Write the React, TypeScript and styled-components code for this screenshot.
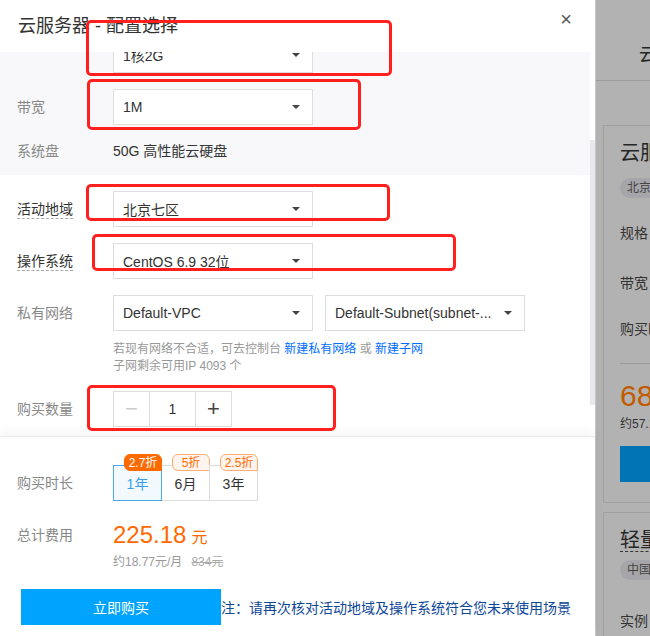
import styled, { createGlobalStyle } from "styled-components";

const GlobalStyle = createGlobalStyle`
	html, body {
		margin: 0;
		padding: 0;
	}
	body {
		font-family: "Liberation Sans", "Noto Sans CJK SC", sans-serif;
		color: #333;
	}
	* {
		box-sizing: border-box;
	}
`

const Page = styled.div`
	position: relative;
	width: 650px;
	height: 636px;
	display: flex;
	overflow: hidden;
`

const Modal = styled.div`
	width: 595px;
	height: 100%;
	display: flex;
	flex-direction: column;
	background: #fff;
`

const Header = styled.div`
	height: 52px;
	flex: none;
	display: flex;
	align-items: center;
	justify-content: space-between;
	padding: 0 23px 4px 18px;
`

const Title = styled.div`
	font-size: 18px;
	color: #333;
`

const Close = styled.div`
	font-size: 20px;
	line-height: 1;
	color: #555;
	margin-top: -10px;
`

const Body = styled.div`
	flex: 1;
	display: flex;
	min-height: 0;
`

const Content = styled.div`
	flex: 1;
	overflow: hidden;
`

const Scroller = styled.div`
	margin-top: -31px;
`

const Rail = styled.div`
	width: 5px;
	flex: none;
	padding-top: 88px;
`

const Thumb = styled.div`
	height: 265px;
	background: #e8e8ee;
`

const Section = styled.div<{ $gray?: boolean }>`
	display: flex;
	flex-direction: column;
	gap: 16px;
	padding: ${(p) => (p.$gray ? "16px 0 14px" : "16px 0 20px")};
	background: ${(p) => (p.$gray ? "#f8f8fa" : "#fff")};
`

const Field = styled.div<{ $gap?: number }>`
	display: flex;
	align-items: flex-start;
	padding-left: 17px;
	margin-top: ${(p) => p.$gap ?? 0}px;
`

const Label = styled.div<{ $strong?: boolean; $tall?: number }>`
	width: 96px;
	flex: none;
	font-size: 14px;
	line-height: ${(p) => p.$tall ?? 36}px;
	color: ${(p) => (p.$strong ? "#333" : "#888")};

	span {
		border-bottom: ${(p) => (p.$strong ? "1px dashed #aaa" : "none")};
		padding-bottom: 1px;
	}
`

const Control = styled.div`
	display: flex;
	flex-direction: column;
`

const SelectRow = styled.div`
	display: flex;
	gap: 12px;
`

const Select = styled.div`
	width: 200px;
	height: 36px;
	border: 1px solid #ddd;
	background: #fff;
	display: flex;
	align-items: center;
	justify-content: space-between;
	padding: 0 12px 0 9px;
	font-size: 14px;
	color: #333;
	white-space: nowrap;
`

const Caret = styled.span`
	width: 0;
	height: 0;
	border-left: 4px solid transparent;
	border-right: 4px solid transparent;
	border-top: 4px solid #444;
	flex: none;
	margin-left: 8px;
`

const PlainValue = styled.div`
	font-size: 14px;
	line-height: 20px;
	color: #333;
`

const Hint = styled.div`
	margin-top: 10px;
	font-size: 12px;
	line-height: 17px;
	color: #999;

	a {
		color: #006eff;
		text-decoration: none;
	}
`

const Stepper = styled.div`
	display: flex;
	height: 36px;
	border: 1px solid #ddd;
	background: #fff;
`

const StepButton = styled.div<{ $disabled?: boolean }>`
	width: 35px;
	display: flex;
	align-items: center;
	justify-content: center;
	font-size: 22px;
	font-weight: 300;
	color: ${(p) => (p.$disabled ? "#ccc" : "#444")};
`

const StepValue = styled.div`
	width: 47px;
	border-left: 1px solid #ddd;
	border-right: 1px solid #ddd;
	display: flex;
	align-items: center;
	justify-content: center;
	font-size: 14px;
	color: #333;
`

const Footer = styled.div`
	position: relative;
	height: 200px;
	flex: none;
	background: #fff;
	border-top: 1px solid #ececf0;
	box-shadow: 0 -5px 10px rgba(0, 0, 0, 0.04);
	padding-top: 28px;
`

const Tabs = styled.div`
	display: flex;
`

const Tab = styled.div<{ $active?: boolean }>`
	position: relative;
	width: 49px;
	height: 36px;
	margin-left: -1px;
	display: flex;
	align-items: center;
	justify-content: center;
	font-size: 14px;
	border: 1px solid ${(p) => (p.$active ? "#4aa9f2" : "#ddd")};
	background: ${(p) => (p.$active ? "#f3faff" : "#fff")};
	color: ${(p) => (p.$active ? "#3a9fef" : "#333")};
	z-index: ${(p) => (p.$active ? 2 : 1)};

	&:first-child {
		margin-left: 0;
	}
`

const Badge = styled.div<{ $solid?: boolean }>`
	position: absolute;
	top: -12px;
	right: -1px;
	width: 38px;
	height: 17px;
	line-height: 16px;
	text-align: center;
	font-size: 12px;
	border-radius: 6px 6px 0 6px;
	border: 1px solid ${(p) => (p.$solid ? "#ff6a00" : "#ffab74")};
	background: ${(p) => (p.$solid ? "#ff6a00" : "#fff5ee")};
	color: ${(p) => (p.$solid ? "#fff" : "#ff6a00")};
`

const PriceBlock = styled.div`
	display: flex;
	flex-direction: column;
`

const Price = styled.div`
	line-height: 28px;
	color: #ff6a00;
	font-size: 24px;

	small {
		font-size: 16px;
		margin-left: 5px;
	}
`

const PriceSub = styled.div`
	font-size: 12px;
	line-height: 20px;
	color: #999;

	s {
		color: #aaa;
		margin-left: 9px;
	}
`

const ActionRow = styled.div`
	display: flex;
	align-items: center;
	margin-top: 17px;
	padding-left: 21px;
`

const BuyButton = styled.div`
	width: 200px;
	height: 36px;
	background: #00a4ff;
	color: #fff;
	font-size: 14px;
	display: flex;
	align-items: center;
	justify-content: center;
`

const Note = styled.div`
	font-size: 14px;
	color: #0d4798;
	white-space: nowrap;
`

const Sidebar = styled.div`
	flex: 1;
	background: #b2b2b2;
	border-left: 1px solid #c6c6c6;
	overflow: hidden;
	white-space: nowrap;
	color: #262626;
`

const SideHead = styled.div`
	height: 81px;
	border-bottom: 1px solid #9c9c9c;
	padding: 45px 0 0 43px;
	font-size: 18px;
	line-height: 20px;
`

const SideBody = styled.div`
	padding: 44px 0 0 7px;
	display: flex;
	flex-direction: column;
	gap: 9px;
`

const Card = styled.div<{ $height: number }>`
	width: 120px;
	height: ${(p) => p.$height}px;
	border: 1px solid #a0a0a0;
	border-right: none;
	padding: 16px 0 0 16px;
	display: flex;
	flex-direction: column;
	align-items: flex-start;
`

const CardTitle = styled.div<{ $dashed?: boolean }>`
	font-size: 20px;
	line-height: 22px;
	border-bottom: ${(p) => (p.$dashed ? "1px dashed #333" : "none")};
`

const Pill = styled.div<{ $gap: number }>`
	margin-top: ${(p) => p.$gap}px;
	height: 20px;
	line-height: 20px;
	padding: 0 10px 0 7px;
	border-radius: 10px;
	background: #a6a6aa;
	font-size: 12px;
	color: #444;
`

const SideLabel = styled.div<{ $gap: number }>`
	margin-top: ${(p) => p.$gap}px;
	font-size: 14px;
	line-height: 20px;
	color: #333;
`

const SideDivider = styled.div`
	margin-top: 24px;
	width: 100%;
	border-top: 1px solid #9c9c9c;
`

const SidePrice = styled.div`
	margin-top: 17px;
	font-size: 30px;
	line-height: 30px;
	color: #c25b00;
`

const SideSub = styled.div`
	margin-top: 5px;
	font-size: 12px;
	line-height: 16px;
	color: #333;
`

const SideButton = styled.div`
	margin-top: 14px;
	width: 100%;
	height: 36px;
	background: #0074b4;
`

const Mark = styled.div<{ $x: number; $y: number; $w: number; $h: number }>`
	position: absolute;
	left: ${(p) => p.$x}px;
	top: ${(p) => p.$y}px;
	width: ${(p) => p.$w}px;
	height: ${(p) => p.$h}px;
	border: 3px solid #ff1f1f;
	border-radius: 5px;
	pointer-events: none;
`

const marks = [
	{ x: 86, y: 20, w: 306, h: 56 },
	{ x: 87, y: 79, w: 274, h: 51 },
	{ x: 86, y: 184, w: 304, h: 37 },
	{ x: 92, y: 234, w: 364, h: 37 },
	{ x: 87, y: 385, w: 249, h: 46 },
];

const durations = [
	{ label: "1年", badge: "2.7折", active: true },
	{ label: "6月", badge: "5折", active: false },
	{ label: "3年", badge: "2.5折", active: false },
];

const Dropdown = ({ value }: { value: string }) => (
	<Select>
		<span>{value}</span>
		<Caret />
	</Select>
);

const App = () => {
	return (
		<>
			<GlobalStyle />
			<Page>
				<Modal>
					<Header>
						<Title>云服务器 - 配置选择</Title>
						<Close>×</Close>
					</Header>
					<Body>
						<Content>
							<Scroller>
								<Section $gray>
									<Field>
										<Label />
										<Dropdown value="1核2G" />
									</Field>
									<Field>
										<Label>带宽</Label>
										<Dropdown value="1M" />
									</Field>
									<Field>
										<Label $tall={20}>系统盘</Label>
										<PlainValue>50G 高性能云硬盘</PlainValue>
									</Field>
								</Section>
								<Section>
									<Field>
										<Label $strong><span>活动地域</span></Label>
										<Dropdown value="北京七区" />
									</Field>
									<Field>
										<Label $strong><span>操作系统</span></Label>
										<Dropdown value="CentOS 6.9 32位" />
									</Field>
									<Field>
										<Label>私有网络</Label>
										<Control>
											<SelectRow>
												<Dropdown value="Default-VPC" />
												<Dropdown value="Default-Subnet(subnet-..." />
											</SelectRow>
											<Hint>
												若现有网络不合适，可去控制台 <a>新建私有网络</a> 或 <a>新建子网</a>
												<br />
												子网剩余可用IP 4093 个
											</Hint>
										</Control>
									</Field>
									<Field>
										<Label>购买数量</Label>
										<Stepper>
											<StepButton $disabled>−</StepButton>
											<StepValue>1</StepValue>
											<StepButton>+</StepButton>
										</Stepper>
									</Field>
								</Section>
							</Scroller>
						</Content>
						<Rail>
							<Thumb />
						</Rail>
					</Body>
					<Footer>
						<Field>
							<Label>购买时长</Label>
							<Tabs>
								{durations.map((d) => (
									<Tab key={d.label} $active={d.active}>
										<Badge $solid={d.active}>{d.badge}</Badge>
										{d.label}
									</Tab>
								))}
							</Tabs>
						</Field>
						<Field $gap={20}>
							<Label $tall={28}>总计费用</Label>
							<PriceBlock>
								<Price>
									225.18<small>元</small>
								</Price>
								<PriceSub>
									约18.77元/月<s>834元</s>
								</PriceSub>
							</PriceBlock>
						</Field>
						<ActionRow>
							<BuyButton>立即购买</BuyButton>
							<Note>注：请再次核对活动地域及操作系统符合您未来使用场景</Note>
						</ActionRow>
					</Footer>
				</Modal>
				<Sidebar>
					<SideHead>云服务器</SideHead>
					<SideBody>
						<Card $height={378}>
							<CardTitle>云服务器</CardTitle>
							<Pill $gap={14}>北京</Pill>
							<SideLabel $gap={25}>规格</SideLabel>
							<SideLabel $gap={30}>带宽</SideLabel>
							<SideLabel $gap={26}>购买时长</SideLabel>
							<SideDivider />
							<SidePrice>68</SidePrice>
							<SideSub>约57.1</SideSub>
							<SideButton />
						</Card>
						<Card $height={130}>
							<CardTitle $dashed>轻量服务器</CardTitle>
							<Pill $gap={8}>中国</Pill>
							<SideLabel $gap={31}>实例</SideLabel>
						</Card>
					</SideBody>
				</Sidebar>
				{marks.map((m, i) => (
					<Mark key={i} $x={m.x} $y={m.y} $w={m.w} $h={m.h} />
				))}
			</Page>
		</>
	);
}

export default App;
